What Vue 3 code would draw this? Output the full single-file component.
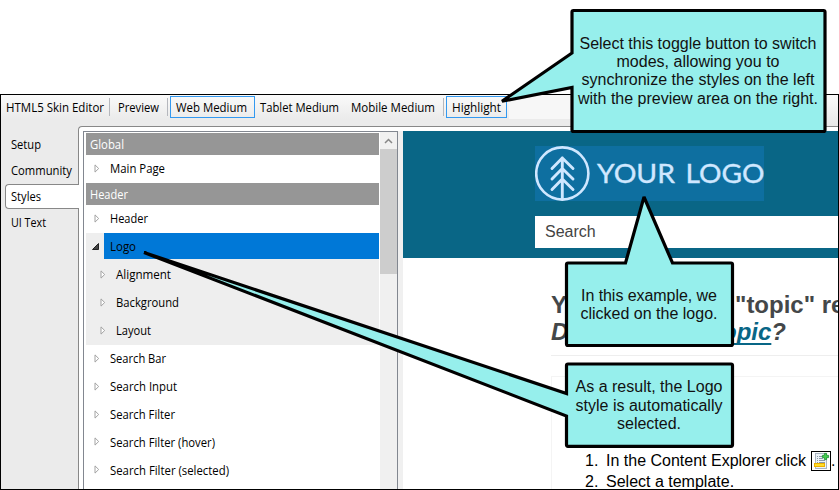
<script setup>
const tools = [
  { label: 'HTML5 Skin Editor', cls: 'title', fit: 98 },
  { sep: true },
  { label: 'Preview', cls: 'preview', fit: 41 },
  { sep: true },
  { label: 'Web Medium', cls: 'web on', fit: 71 },
  { label: 'Tablet Medium', cls: 'tablet', fit: 79 },
  { label: 'Mobile Medium', cls: 'mobile', fit: 84 },
  { sep: true },
  { label: 'Highlight', cls: 'highlight on', fit: 49 }
]
const tabs = [
  { label: 'Setup', fit: 30 },
  { label: 'Community', fit: 61 },
  { label: 'Styles', fit: 30, active: true },
  { label: 'UI Text', fit: 35 }
]
const rows = [
  { label: 'Global', kind: 'group', fit: 34 },
  { label: 'Main Page', kind: 'item', fit: 55 },
  { label: 'Header', kind: 'group', fit: 38 },
  { label: 'Header', kind: 'item', fit: 38 },
  { label: 'Logo', kind: 'item open', fit: 26 },
  { label: 'Alignment', kind: 'item child', fit: 55 },
  { label: 'Background', kind: 'item child', fit: 63 },
  { label: 'Layout', kind: 'item child', fit: 35 },
  { label: 'Search Bar', kind: 'item', fit: 56 },
  { label: 'Search Input', kind: 'item', fit: 67 },
  { label: 'Search Filter', kind: 'item', fit: 65 },
  { label: 'Search Filter (hover)', kind: 'item tight', fit: 105 },
  { label: 'Search Filter (selected)', kind: 'item', fit: 119 }
]
</script>

<template>
  <div class="page">
    <div class="window">
      <div class="toolbar">
        <div class="strip">
          <template v-for="(t, i) in tools" :key="i">
            <i v-if="t.sep" class="sep"></i>
            <span v-else class="tool" :class="t.cls">
              <svg class="lbl" :width="t.fit + 2" height="18"><text x="0" y="13" :textLength="t.fit" lengthAdjust="spacingAndGlyphs">{{ t.label }}</text></svg>
            </span>
          </template>
        </div>
        <div class="strip-end"></div>
      </div>
      <div class="body">
        <nav class="tabs">
          <div v-for="t in tabs" :key="t.label" class="tab" :class="{ active: t.active }">
            <svg class="lbl" :width="t.fit + 2" height="18"><text x="0" y="13" :textLength="t.fit" lengthAdjust="spacingAndGlyphs">{{ t.label }}</text></svg>
          </div>
        </nav>
        <div class="content">
          <div class="tree">
            <div class="rows">
              <div v-for="(r, i) in rows" :key="i" class="row" :class="r.kind">
                <span v-if="r.kind !== 'group'" class="arrow">
                  <svg v-if="r.kind === 'item open'" width="7" height="7"><path d="M6.5 0.5V6.5H0.5Z" fill="#444" stroke="#222" /></svg>
                  <svg v-else width="6" height="9"><path d="M1 .9L4.7 4.5L1 8.1Z" fill="#fff" stroke="#a3a3a3" /></svg>
                </span>
                <span class="cell">
                  <svg class="lbl" :width="r.fit + 2" height="18"><text x="0" y="13" :textLength="r.fit" lengthAdjust="spacingAndGlyphs">{{ r.label }}</text></svg>
                </span>
              </div>
            </div>
            <div class="scroll">
              <svg width="17" height="17"><path d="M5 11L8.5 7.5L12 11" fill="none" stroke="#868686" stroke-width="1.5" /></svg>
              <div class="thumb"></div>
            </div>
          </div>
          <div class="preview-pane">
            <header class="hero">
              <div class="logo">
                <svg width="229" height="55" viewBox="0 0 229 55">
                  <g fill="none" stroke="#cfe7ff">
                    <circle cx="27.3" cy="27.5" r="26.1" stroke-width="2.6" />
                    <path d="M27.3 12V53M17 22.5L27.3 12L38 22.5M17 33L27.3 22.5L38 33M17 43.5L27.3 33L38 43.5" stroke-width="2.9" stroke-linecap="round" stroke-linejoin="round" />
                  </g>
                  <text class="brand" x="62" y="37.2" textLength="78" lengthAdjust="spacingAndGlyphs">YOUR</text>
                  <text class="brand" x="150.5" y="37.2" textLength="79" lengthAdjust="spacingAndGlyphs">LOGO</text>
                </svg>
              </div>
              <div class="search">Search</div>
            </header>
            <section class="article">
              <div class="headline"><span>Y</span><span>"topic" re</span></div>
              <div class="headline second"><em>D</em><em><u>topic</u>?</em></div>
              <div class="rule"></div>
              <div class="card">
                <ol>
                  <li><b>1.</b><span class="step">In the Content Explorer click</span>
                    <svg class="newtopic" width="20" height="20" viewBox="0 0 20 20">
                      <rect x=".5" y=".5" width="19" height="19" fill="#fff" stroke="#000" />
                      <rect x="4.5" y="2.5" width="11" height="15" fill="#edf3f8" stroke="#a9b5c1" />
                      <path d="M6 5.5H7M8 5.5H12M6 7.5H7M8 7.5H12M6 9.5H7M8 9.5H14M6 11.5H7M8 11.5H14" stroke="#8999a8" />
                      <rect x="3.5" y="12.5" width="10" height="3" fill="#ffdf2b" stroke="#edb000" />
                      <path d="M13.4 2.4h2.2v2h2v2.2h-2v2h-2.2v-2h-2v-2.2h2z" fill="#42cf4b" stroke="#25943c" stroke-width=".9" />
                    </svg><span>.</span>
                  </li>
                  <li><b>2.</b><span>Select a template.</span></li>
                </ol>
              </div>
            </section>
          </div>
        </div>
      </div>
    </div>

    <svg class="callouts" width="839" height="490" viewBox="0 0 839 490">
      <g class="bubble">
        <path d="M573.5 10.5H823.5Q825 10.5 825 12V130Q825 131.5 823.5 131.5H573.5Q572 131.5 572 130V87.5L502 101.3L572 53V12Q572 10.5 573.5 10.5Z" />
        <path d="M568 263H625.5L644 197L672.5 263H731Q732.5 263 732.5 264.5V344Q732.5 345.5 731 345.5H568Q566.5 345.5 566.5 344V264.5Q566.5 263 568 263Z" />
        <path d="M568 364H731Q732.5 364 732.5 365.5V444.8Q732.5 446.3 731 446.3H568Q566.5 446.3 566.5 444.8V416L144 252.5L566.5 393.5V365.5Q566.5 364 568 364Z" />
      </g>
      <g class="note">
        <text x="698" y="49" textLength="237">Select this toggle button to switch</text>
        <text x="698" y="67" textLength="163">modes, allowing you to</text>
        <text x="698" y="85" textLength="233">synchronize the styles on the left</text>
        <text x="698" y="104" textLength="240">with the preview area on the right.</text>
        <text x="649" y="301" textLength="136">In this example, we</text>
        <text x="649" y="319" textLength="137">clicked on the logo.</text>
        <text x="649" y="392" textLength="147">As a result, the Logo</text>
        <text x="649" y="411" textLength="147">style is automatically</text>
        <text x="649" y="429" textLength="64">selected.</text>
      </g>
    </svg>
  </div>
</template>

<style>
body { margin: 0; background: #fff; overflow: hidden; }
</style>

<style scoped>
* { box-sizing: border-box; }
.page { position: relative; width: 839px; height: 490px; padding-top: 94px; overflow: hidden; font-family: "Liberation Sans", sans-serif; }
.window { width: 839px; height: 396px; border: 1px solid #000; background: #ebebeb; display: flex; flex-direction: column; overflow: hidden; }
.lbl { display: block; flex: none; overflow: visible; font-family: "Open Sans", "Noto Sans", sans-serif; font-size: 12px; fill: #000; }
.toolbar { height: 31px; flex: none; display: flex; justify-content: space-between; background: linear-gradient(#f7f7f7, #f7f7f7) 0 0 / 100% 24px no-repeat #ebebeb; }
.strip { display: flex; width: 508px; height: 24px; background: linear-gradient(#fafafa, #ebebeb); padding-left: 5px; }
.strip-end { width: 60px; height: 31px; background: linear-gradient(#fbfbfb, #e8e8e8); }
.sep { width: 1px; height: 18px; margin-top: 3px; background: #b5b7bd; flex: none; }
.tool { height: 22px; margin-top: 1px; flex: none; display: flex; align-items: center; border: 1px solid transparent; border-width: 1px 0; padding-top: 1px; }
.title { width: 103px; }
.preview { width: 57px; padding-left: 8px; }
.on { border: 1px solid #3399f0; }
.web { width: 85px; margin-left: 2px; padding-left: 5px; }
.tablet { width: 91px; padding-left: 5px; }
.mobile { width: 97px; padding-left: 5px; }
.highlight { width: 61px; margin-left: 2px; padding-left: 5px; }
.body { display: flex; flex: 1; min-height: 0; }
.tabs { width: 77px; flex: none; padding-top: 6px; position: relative; z-index: 1; }
.tab { height: 25px; margin-bottom: 1px; padding-left: 10px; display: flex; align-items: center; }
.tab.active { margin-left: 4px; margin-right: -1px; padding-left: 5px; padding-top: 1px; background: #fff; border: 1px solid #888; border-right: 0; border-radius: 4px 0 0 4px; }
.content { flex: 1; min-width: 0; display: flex; background: #fff; border: 1px solid #888; border-width: 1px 0 0 1px; border-radius: 4px 0 0 0; padding: 4px 0 0 4px; }
.tree { width: 315px; flex: none; border: 1px solid #828790; border-bottom: 0; display: flex; padding-left: 2px; background: #fff; }
.rows { width: 294px; padding-top: 1px; flex: none; }
.row { height: 28px; display: flex; align-items: center; }
.row.group { height: 22px; background: #969696; padding-left: 4px; width: 293px; }
.group .lbl { fill: #fff; }
.group .cell { padding: 1px 0 0; }
.arrow { width: 18px; padding: 0 0 2px 8px; flex: none; display: flex; }
.open .arrow { padding-left: 6px; }
.cell { padding-left: 6px; display: flex; align-items: center; height: 28px; }
.open { background: linear-gradient(#eee, #eee) 0 0 / 293px 28px no-repeat; }
.open .cell { width: 275px; height: 26px; padding-top: 2px; background: #0078d7; align-self: flex-start; }
.open .arrow { height: 28px; align-items: center; }
.child { background: #eee; width: 293px; padding-left: 6px; }
.child .cell { padding-bottom: 1px; }
.tight { height: 27px; }
.tight .cell { height: 27px; }
.tight + .row .cell { padding-top: 2px; }
.scroll { width: 17px; background: #f0f0f0; flex: none; }
.scroll svg { display: block; }
.thumb { height: 125px; background: #cdcdcd; }
.preview-pane { flex: 1; min-width: 0; border-left: 5px solid #f0f0f0; background: #fff; }
.hero { height: 127px; background: #096686; padding: 15px 0 0 132px; }
.logo { width: 229px; height: 55px; background: #0e6fa0; }
.logo svg { display: block; }
.brand { font-family: Lato, sans-serif; font-size: 27.5px; fill: #cfe7ff; stroke: #cfe7ff; stroke-width: .35px; }
.search { height: 32px; margin-top: 15px; padding-left: 10px; line-height: 31px; font-size: 16px; color: #444; background: #fff; }
.article { padding: 33px 0 0 148px; color: #444749; }
.headline { display: grid; grid-template-columns: 184px auto; height: 27px; line-height: 27px; font-size: 24px; font-weight: bold; white-space: nowrap; }
.second { grid-template-columns: 163px auto; }
.headline u { color: #086686; text-decoration-thickness: 2px; text-underline-offset: 3px; text-decoration-skip-ink: none; }
.rule { height: 1px; margin-top: 10px; background: #eee; }
.card { margin-top: 20px; border: 1px solid #f4f4f4; border-width: 1px 0 0 1px; height: 113px; padding-top: 73px; }
ol { list-style: none; margin: 0; padding: 0 0 0 33px; font-size: 16px; color: #000; }
li { display: flex; align-items: center; height: 21px; white-space: nowrap; }
li b { font-weight: normal; width: 21px; flex: none; }
.step { width: 205px; flex: none; }
.newtopic { flex: none; }
.callouts { position: absolute; left: 0; top: 0; z-index: 2; }
.bubble { fill: #96efec; stroke: #000; stroke-width: 3.2; stroke-linejoin: miter; stroke-miterlimit: 2; }
.note { font-size: 16px; fill: #111; text-anchor: middle; }
</style>
